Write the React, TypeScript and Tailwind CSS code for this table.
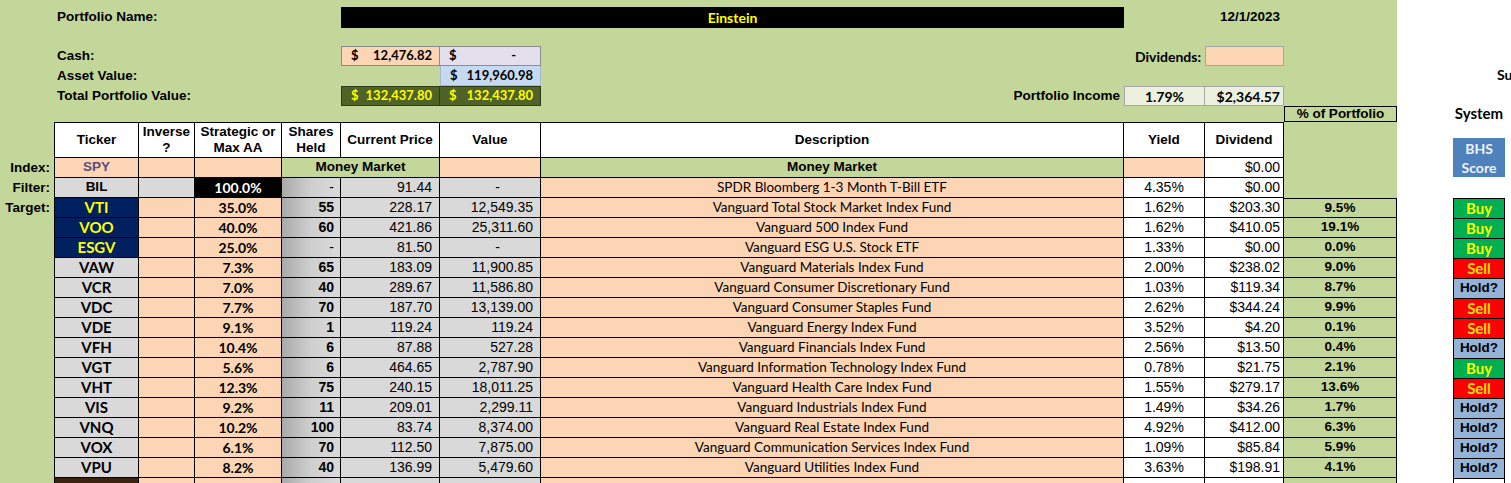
import React from 'react'
import clsx from 'clsx'

const arial = "font-['Liberation_Sans',Arial,sans-serif]"
const calibri = "font-['Lato','Open_Sans',sans-serif]"

// column widths of the sheet, A..K
const C = [
  'w-[54px]', 'w-[85px]', 'w-[56px]', 'w-[87px]', 'w-[59px]', 'w-[99px]',
  'w-[101px]', 'w-[583px]', 'w-[81px]', 'w-[79px]', 'w-[113px]',
]

type Signal = 'Buy' | 'Sell' | 'Hold?'
type Holding = {
  t: string; navy?: boolean; aa: string; sh: string; px: string; val: string
  desc: string; y: string; d: string; p: string; s: Signal
}

const ROWS: Holding[] = [
  { t: 'VTI', navy: true, aa: '35.0%', sh: '55', px: '228.17', val: '12,549.35', desc: 'Vanguard Total Stock Market Index Fund', y: '1.62%', d: '$203.30', p: '9.5%', s: 'Buy' },
  { t: 'VOO', navy: true, aa: '40.0%', sh: '60', px: '421.86', val: '25,311.60', desc: 'Vanguard 500 Index Fund', y: '1.62%', d: '$410.05', p: '19.1%', s: 'Buy' },
  { t: 'ESGV', navy: true, aa: '25.0%', sh: '-', px: '81.50', val: '-', desc: 'Vanguard ESG U.S. Stock ETF', y: '1.33%', d: '$0.00', p: '0.0%', s: 'Buy' },
  { t: 'VAW', aa: '7.3%', sh: '65', px: '183.09', val: '11,900.85', desc: 'Vanguard Materials Index Fund', y: '2.00%', d: '$238.02', p: '9.0%', s: 'Sell' },
  { t: 'VCR', aa: '7.0%', sh: '40', px: '289.67', val: '11,586.80', desc: 'Vanguard Consumer Discretionary Fund', y: '1.03%', d: '$119.34', p: '8.7%', s: 'Hold?' },
  { t: 'VDC', aa: '7.7%', sh: '70', px: '187.70', val: '13,139.00', desc: 'Vanguard Consumer Staples Fund', y: '2.62%', d: '$344.24', p: '9.9%', s: 'Sell' },
  { t: 'VDE', aa: '9.1%', sh: '1', px: '119.24', val: '119.24', desc: 'Vanguard Energy Index Fund', y: '3.52%', d: '$4.20', p: '0.1%', s: 'Sell' },
  { t: 'VFH', aa: '10.4%', sh: '6', px: '87.88', val: '527.28', desc: 'Vanguard Financials Index Fund', y: '2.56%', d: '$13.50', p: '0.4%', s: 'Hold?' },
  { t: 'VGT', aa: '5.6%', sh: '6', px: '464.65', val: '2,787.90', desc: 'Vanguard Information Technology Index Fund', y: '0.78%', d: '$21.75', p: '2.1%', s: 'Buy' },
  { t: 'VHT', aa: '12.3%', sh: '75', px: '240.15', val: '18,011.25', desc: 'Vanguard Health Care Index Fund', y: '1.55%', d: '$279.17', p: '13.6%', s: 'Sell' },
  { t: 'VIS', aa: '9.2%', sh: '11', px: '209.01', val: '2,299.11', desc: 'Vanguard Industrials Index Fund', y: '1.49%', d: '$34.26', p: '1.7%', s: 'Hold?' },
  { t: 'VNQ', aa: '10.2%', sh: '100', px: '83.74', val: '8,374.00', desc: 'Vanguard Real Estate Index Fund', y: '4.92%', d: '$412.00', p: '6.3%', s: 'Hold?' },
  { t: 'VOX', aa: '6.1%', sh: '70', px: '112.50', val: '7,875.00', desc: 'Vanguard Communication Services Index Fund', y: '1.09%', d: '$85.84', p: '5.9%', s: 'Hold?' },
  { t: 'VPU', aa: '8.2%', sh: '40', px: '136.99', val: '5,479.60', desc: 'Vanguard Utilities Index Fund', y: '3.63%', d: '$198.91', p: '4.1%', s: 'Hold?' },
]

const SIGNAL: Record<Signal, string> = {
  Buy: `bg-[#00b050] text-[#ffff00] ${calibri} text-[15px]`,
  Sell: `bg-[#ff0000] text-[#ffe000] ${calibri} text-[15px]`,
  'Hold?': `bg-[#95b3d7] text-black ${arial} text-[13.5px]`,
}

const bd = 'border-r border-b border-black'
const orange = 'bg-[#fcd5b4]'
const gray = 'bg-[#d9d9d9]'
const shares = 'bg-linear-to-r from-[#a9a9a9] via-[#cfcfcf] to-[#dadada]'
const label = `${arial} text-[13.5px] font-bold`

function Cell({ w, className, children }: { w: string; className?: string; children?: React.ReactNode }) {
  return (
    <div className={clsx('flex h-full shrink-0 items-center overflow-hidden whitespace-nowrap', w, className)}>
      {children}
    </div>
  )
}

function Acct({ w, className, value, dash }: { w: string; className: string; value: string; dash?: boolean }) {
  return (
    <div className={clsx('flex h-full shrink-0 items-center justify-between pl-[9px] font-bold text-[13px]', calibri, dash ? 'pr-[24px]' : 'pr-[7px]', w, className)}>
      <span>$</span>
      <span>{value}</span>
    </div>
  )
}

function Label({ children }: { children: React.ReactNode }) {
  return <Cell w={C[0]} className={`justify-end pr-1 ${label}`}>{children}</Cell>
}

export default function App() {
  return (
    <div className="flex h-[483px] w-[1511px] overflow-hidden bg-white text-black">
      {/* the sheet */}
      <div className="flex w-[1397px] shrink-0 flex-col bg-[#c4d79b]">
        <div className="h-[7px] shrink-0" />
        <div className="flex h-[21px] shrink-0">
          <Cell w={C[0]} />
          <Cell w="w-[287px]" className={`pl-[3px] ${label}`}>Portfolio Name:</Cell>
          <Cell w="w-[783px]" className={`justify-center bg-black text-[#ffff00] ${calibri} text-[14px] font-bold`}>Einstein</Cell>
          <Cell w={C[8]} />
          <Cell w={C[9]} className={`justify-end pr-1 ${label}`}>12/1/2023</Cell>
        </div>
        <div className="h-[18px] shrink-0" />

        <div className="flex h-5 shrink-0">
          <Cell w={C[0]} />
          <Cell w="w-[287px]" className={`pl-[3px] ${label}`}>Cash:</Cell>
          <Acct w={C[5]} className="border border-[#8c8c8c] bg-[#fcd5b4]" value="12,476.82" />
          <Acct w={C[6]} className="border border-l-0 border-[#8c8c8c] bg-[#e4dfec]" value="-" dash />
          <Cell w={C[7]} />
          <Cell w={C[8]} className={`justify-end pr-1 ${calibri} text-[14px] font-bold`}>Dividends:</Cell>
          <Cell w={C[9]} className="border border-[#a6a6a6] bg-[#fcd5b4]" />
        </div>
        <div className="flex h-5 shrink-0">
          <Cell w={C[0]} />
          <Cell w="w-[287px]" className={`pl-[3px] ${label}`}>Asset Value:</Cell>
          <Cell w={C[5]} />
          <Acct w={C[6]} className="border border-t-0 border-[#a6b8d0] bg-[#c5d9f1]" value="119,960.98" />
        </div>
        <div className="flex h-5 shrink-0">
          <Cell w={C[0]} />
          <Cell w="w-[287px]" className={`pl-[3px] ${label}`}>Total Portfolio Value:</Cell>
          <Acct w={C[5]} className="border border-[#2f3b17] bg-[#4f6228] text-[#ffff00]" value="132,437.80" />
          <Acct w={C[6]} className="border border-l-0 border-[#2f3b17] bg-[#4f6228] text-[#ffff00]" value="132,437.80" />
          <Cell w={C[7]} className={`justify-end pr-1 ${label}`}>Portfolio Income</Cell>
          <Cell w={C[8]} className={`justify-center border border-[#a6a6a6] bg-[#ebf1de] ${calibri} text-[14px] font-bold`}>1.79%</Cell>
          <Cell w={C[9]} className={`justify-end border border-l-0 border-[#a6a6a6] bg-[#ebf1de] pr-[3px] ${calibri} text-[14px] font-bold`}>$2,364.57</Cell>
        </div>
        <div className="flex h-4 shrink-0">
          <Cell w="w-[1284px]" />
          <Cell w={C[10]} className={`justify-center border border-black ${label}`}>% of Portfolio</Cell>
        </div>

        {/* column headers */}
        <div className={`flex h-9 shrink-0 text-center ${label} leading-4`}>
          <Cell w={C[0]} />
          <Cell w={C[1]} className={`justify-center border-t border-l bg-white ${bd}`}>Ticker</Cell>
          <Cell w={C[2]} className={`justify-center border-t bg-white ${bd}`}>Inverse<br />?</Cell>
          <Cell w={C[3]} className={`justify-center border-t bg-white ${bd}`}>Strategic or<br />Max AA</Cell>
          <Cell w={C[4]} className={`justify-center border-t bg-white ${bd}`}>Shares<br />Held</Cell>
          <Cell w={C[5]} className={`justify-center border-t bg-white ${bd}`}>Current Price</Cell>
          <Cell w={C[6]} className={`justify-center border-t bg-white ${bd}`}>Value</Cell>
          <Cell w={C[7]} className={`justify-center border-t bg-white ${bd}`}>Description</Cell>
          <Cell w={C[8]} className={`justify-center border-t bg-white ${bd}`}>Yield</Cell>
          <Cell w={C[9]} className={`justify-center border-t bg-white ${bd}`}>Dividend</Cell>
        </div>

        {/* index row */}
        <div className={`flex h-5 shrink-0 ${arial} text-[14px]`}>
          <Label>Index:</Label>
          <Cell w={C[1]} className={`justify-center border-l ${bd} ${orange} text-[13.5px] font-bold text-[#604a7b]`}>SPY</Cell>
          <Cell w={C[2]} className={`${bd} ${orange}`} />
          <Cell w={C[3]} className={`${bd} ${orange}`} />
          <Cell w="w-[158px]" className={`justify-center ${bd} text-[13.5px] font-bold`}>Money Market</Cell>
          <Cell w={C[6]} className={`${bd} ${orange}`} />
          <Cell w={C[7]} className={`justify-center ${bd} text-[13.5px] font-bold`}>Money Market</Cell>
          <Cell w={C[8]} className={`${bd} ${orange}`} />
          <Cell w={C[9]} className={`justify-end pr-[3px] ${bd} bg-white`}>$0.00</Cell>
        </div>

        {/* filter row */}
        <div className={`flex h-5 shrink-0 ${arial} text-[14px]`}>
          <Label>Filter:</Label>
          <Cell w={C[1]} className={`justify-center border-l ${bd} ${gray} text-[13.5px] font-bold`}>BIL</Cell>
          <Cell w={C[2]} className={`${bd} ${gray}`} />
          <Cell w={C[3]} className={`justify-center ${bd} bg-black text-white ${calibri} font-bold`}>100.0%</Cell>
          <Cell w={C[4]} className={`justify-end pr-[6px] ${bd} ${shares}`}>-</Cell>
          <Cell w={C[5]} className={`justify-end pr-[7px] ${bd} ${gray}`}>91.44</Cell>
          <Cell w={C[6]} className={`justify-end pr-[40px] ${bd} ${gray}`}>-</Cell>
          <Cell w={C[7]} className={`justify-center ${bd} ${orange} ${calibri} text-[13.5px]`}>SPDR Bloomberg 1-3 Month T-Bill ETF</Cell>
          <Cell w={C[8]} className={`justify-center ${bd} bg-white`}>4.35%</Cell>
          <Cell w={C[9]} className={`justify-end pr-[3px] ${bd} bg-white`}>$0.00</Cell>
        </div>

        {ROWS.map((r, i) => (
          <div key={r.t} className={`flex h-5 shrink-0 ${arial} text-[14px]`}>
            {i === 0 ? <Label>Target:</Label> : <Cell w={C[0]} />}
            <Cell
              w={C[1]}
              className={clsx('justify-center border-l text-[15px] font-bold', bd, calibri, r.navy ? 'bg-[#002060] text-[#ffff00]' : gray)}
            >
              {r.t}
            </Cell>
            <Cell w={C[2]} className={`${bd} ${orange}`} />
            <Cell w={C[3]} className={`justify-center ${bd} ${orange} ${calibri} font-bold`}>{r.aa}</Cell>
            <Cell w={C[4]} className={clsx('justify-end pr-[6px]', bd, shares, r.sh !== '-' && 'font-bold')}>{r.sh}</Cell>
            <Cell w={C[5]} className={`justify-end pr-[7px] ${bd} ${gray}`}>{r.px}</Cell>
            <Cell w={C[6]} className={clsx('justify-end', bd, gray, r.val === '-' ? 'pr-[40px]' : 'pr-[7px]')}>{r.val}</Cell>
            <Cell w={C[7]} className={`justify-center ${bd} ${orange} ${calibri} text-[13.5px]`}>{r.desc}</Cell>
            <Cell w={C[8]} className={`justify-center ${bd} bg-white`}>{r.y}</Cell>
            <Cell w={C[9]} className={`justify-end pr-[3px] ${bd} bg-white`}>{r.d}</Cell>
            <Cell w={C[10]} className={clsx('justify-center text-[13.5px] font-bold', bd, i === 0 && 'border-t')}>{r.p}</Cell>
          </div>
        ))}

        {/* next row, cut off by the window */}
        <div className="flex h-5 shrink-0">
          <Cell w={C[0]} />
          <Cell w={C[1]} className={`border-l ${bd} bg-[#3a2410]`} />
          <Cell w={C[2]} className={`${bd} ${orange}`} />
          <Cell w={C[3]} className={`${bd} ${orange}`} />
          <Cell w={C[4]} className={`${bd} ${shares}`} />
          <Cell w={C[5]} className={`${bd} ${gray}`} />
          <Cell w={C[6]} className={`${bd} ${gray}`} />
          <Cell w={C[7]} className={`${bd} ${orange}`} />
          <Cell w={C[8]} className={`${bd} bg-white`} />
          <Cell w={C[9]} className={`${bd} bg-white`} />
          <Cell w={C[10]} className={bd} />
        </div>
      </div>

      {/* system column */}
      <div className={`flex w-[114px] shrink-0 flex-col overflow-hidden ${calibri} font-bold`}>
        <div className="h-16 shrink-0" />
        <div className="flex h-5 shrink-0 items-center whitespace-nowrap pl-[100px] text-[14px]">Su</div>
        <div className="h-5 shrink-0" />
        <div className="ml-14 flex h-[18px] w-[52px] shrink-0 items-center justify-center text-[15px]">System</div>
        <div className="h-4 shrink-0" />
        <div className="ml-14 flex h-[39px] w-[52px] shrink-0 flex-col items-center justify-center bg-[#4f81bd] text-[14px] leading-[19px] text-[#eef2f8]">
          <span>BHS</span>
          <span>Score</span>
        </div>
        <div className="h-[21px] shrink-0" />
        <div className="ml-14 flex w-[52px] flex-col border-t border-black">
          {ROWS.map((r) => (
            <div key={r.t} className={clsx('flex h-5 shrink-0 items-center justify-center border-x border-b border-black font-bold', SIGNAL[r.s])}>
              {r.s}
            </div>
          ))}
          <div className="h-5 shrink-0 border-x border-b border-black bg-white" />
        </div>
      </div>
    </div>
  )
}
